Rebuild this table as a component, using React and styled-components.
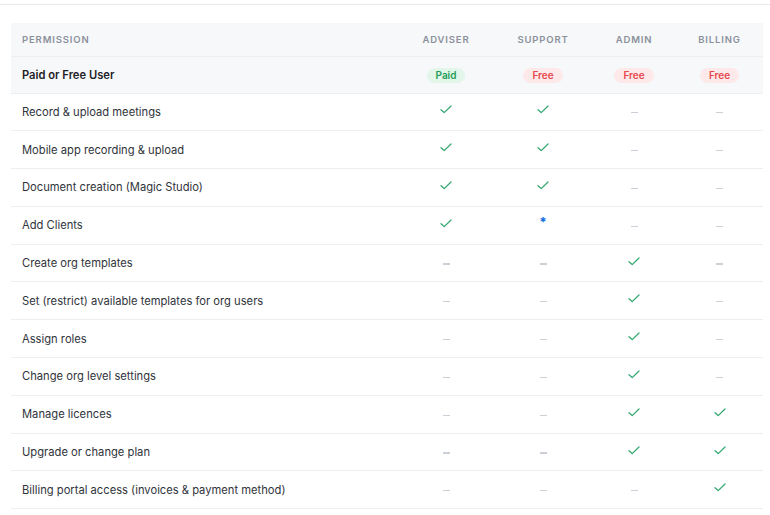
import React from 'react';
import styled, { createGlobalStyle } from 'styled-components';

const GlobalStyle = createGlobalStyle`
  body {
    margin: 0;
    background: #ffffff;
    font-family: Inter, 'Noto Sans', sans-serif;
    -webkit-font-smoothing: antialiased;
  }
`;

const Page = styled.div`
  width: 770px;
  height: 515px;
  overflow: hidden;
  border-top: 1px solid #e8eaee;
  margin-top: 4px;
  padding: 18px 7px 0 11px;
  box-sizing: border-box;
`;

const Table = styled.table`
  width: 752px;
  border-collapse: collapse;
  table-layout: fixed;
`;

const HeadRow = styled.tr`
  background: #f7f8fa;
  height: 33px;
`;

const Th = styled.th`
  font-size: 9.5px;
  font-weight: 600;
  letter-spacing: 0.09em;
  color: #8b919c;
  text-transform: uppercase;
  text-align: ${(p) => (p.$left ? 'left' : 'center')};
  padding: 0 0 0 ${(p) => (p.$left ? '11px' : '0')};
  border-bottom: 1px solid #eceef1;
`;

const Row = styled.tr`
  height: ${(p) => (p.$tier ? '37px' : '37.8px')};
  background: ${(p) => (p.$tier ? '#f7f8fa' : '#ffffff')};
`;

const Td = styled.td`
  border-bottom: 1px solid #eceef1;
  padding: 0 0 0 ${(p) => (p.$left ? '11px' : '0')};
  text-align: ${(p) => (p.$left ? 'left' : 'center')};
  font-size: 11.2px;
  color: ${(p) => (p.$strong ? '#1d2026' : '#30343b')};
  font-weight: ${(p) => (p.$strong ? 600 : 400)};
  vertical-align: middle;
`;

const Pill = styled.span`
  display: inline-block;
  padding: 1px 9px 1px;
  border-radius: 8px;
  font-size: 10px;
  font-weight: 600;
  line-height: 13px;
  transform: translateY(1px);
  background: ${(p) => (p.$paid ? '#e2f6e9' : '#fde9e9')};
  color: ${(p) => (p.$paid ? '#1f9d57' : '#e5484d')};
`;

const Dash = styled.span`
  display: inline-block;
  width: 7px;
  height: 1.3px;
  background: #cbcfd7;
  vertical-align: middle;
`;

const Star = styled.span`
  display: inline-block;
  color: #1570dc;
  font-size: 13px;
  font-weight: 800;
  transform: translateY(-3px);
`;

const CheckSvg = styled.svg`
  display: inline-block;
  vertical-align: middle;
  transform: translateY(-3px);
`;

function Check() {
  return (
    <CheckSvg width="12" height="9" viewBox="0 0 12 9">
      <path d="M1 4.8 L4.2 7.6 L11 1" fill="none" stroke="#36a872" strokeWidth="1.3" strokeLinecap="round" strokeLinejoin="round" />
    </CheckSvg>
  );
}

function Cell({ v }) {
  if (v === 'y') return <Check />;
  if (v === '*') return <Star>*</Star>;
  return <Dash />;
}

const roles = ['Adviser', 'Support', 'Admin', 'Billing'];
const widths = [387, 96, 98, 84, 87];

const permissions = [
  ['Record & upload meetings', 'y', 'y', '-', '-'],
  ['Mobile app recording & upload', 'y', 'y', '-', '-'],
  ['Document creation (Magic Studio)', 'y', 'y', '-', '-'],
  ['Add Clients', 'y', '*', '-', '-'],
  ['Create org templates', '-', '-', 'y', '-'],
  ['Set (restrict) available templates for org users', '-', '-', 'y', '-'],
  ['Assign roles', '-', '-', 'y', '-'],
  ['Change org level settings', '-', '-', 'y', '-'],
  ['Manage licences', '-', '-', 'y', 'y'],
  ['Upgrade or change plan', '-', '-', 'y', 'y'],
  ['Billing portal access (invoices & payment method)', '-', '-', '-', 'y'],
];

export default function App() {
  return (
    <Page>
      <GlobalStyle />
      <Table>
        <colgroup>
          {widths.map((w, i) => (
            <col key={i} style={{ width: w }} />
          ))}
        </colgroup>
        <thead>
          <HeadRow>
            <Th $left>Permission</Th>
            {roles.map((r) => (
              <Th key={r}>{r}</Th>
            ))}
          </HeadRow>
        </thead>
        <tbody>
          <Row $tier>
            <Td $left $strong>Paid or Free User</Td>
            <Td><Pill $paid>Paid</Pill></Td>
            <Td><Pill>Free</Pill></Td>
            <Td><Pill>Free</Pill></Td>
            <Td><Pill>Free</Pill></Td>
          </Row>
          {permissions.map(([label, ...vals]) => (
            <Row key={label}>
              <Td $left>{label}</Td>
              {vals.map((v, i) => (
                <Td key={i}>
                  <Cell v={v} />
                </Td>
              ))}
            </Row>
          ))}
        </tbody>
      </Table>
    </Page>
  );
}
